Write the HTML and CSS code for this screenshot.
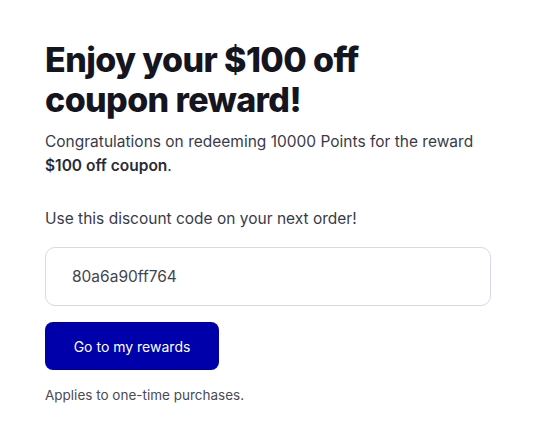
FILE: index.html
```html
<!DOCTYPE html>
<html>
<head>
<meta charset="utf-8">
<link rel="stylesheet" href="styles.css">
</head>
<body>
<main class="card">
  <h1 class="title">Enjoy your $100 off<br>coupon reward!</h1>
  <p class="lead">Congratulations on redeeming 10000 Points for the reward <strong>$100 off coupon</strong>.</p>
  <p class="instr">Use this discount code on your next order!</p>
  <div class="code">80a6a90ff764</div>
  <button class="btn">Go to my rewards</button>
  <p class="note">Applies to one-time purchases.</p>
</main>
</body>
</html>
```
FILE: styles.css
```css
html, body {
  margin: 0;
  padding: 0;
  background: #ffffff;
}
.card {
  padding: 40px 45px 0 45px;
  font-family: "Inter", "Liberation Sans", sans-serif;
  color: #3a3a48;
  width: 446px;
}
.title {
  margin: 0;
  font-family: "Inter", "Liberation Sans", sans-serif;
  font-weight: 800;
  font-size: 34px;
  line-height: 40px;
  letter-spacing: -0.6px;
  color: #15151f;
}
.lead {
  margin: 10px 0 0 0;
  font-size: 15.5px;
  line-height: 24px;
}
.lead strong {
  font-weight: 600;
  color: #2a2a36;
}
.instr {
  margin: 29px 0 0 0;
  font-size: 15.5px;
  line-height: 24px;
}
.code {
  margin-top: 16px;
  box-sizing: border-box;
  height: 59px;
  border: 1px solid #d6d8f0;
  border-radius: 10px;
  padding: 0 26px;
  display: flex;
  align-items: center;
  font-size: 15.5px;
  color: #44444f;
}
.btn {
  margin-top: 16px;
  display: block;
  width: 174px;
  height: 48px;
  border: none;
  border-radius: 8px;
  background: #0000aa;
  color: #ffffff;
  font-family: "Inter", "Liberation Sans", sans-serif;
  font-size: 14px;
}
.note {
  margin: 15px 0 0 0;
  font-size: 13.5px;
  line-height: 20px;
  color: #4a4a55;
}
```
